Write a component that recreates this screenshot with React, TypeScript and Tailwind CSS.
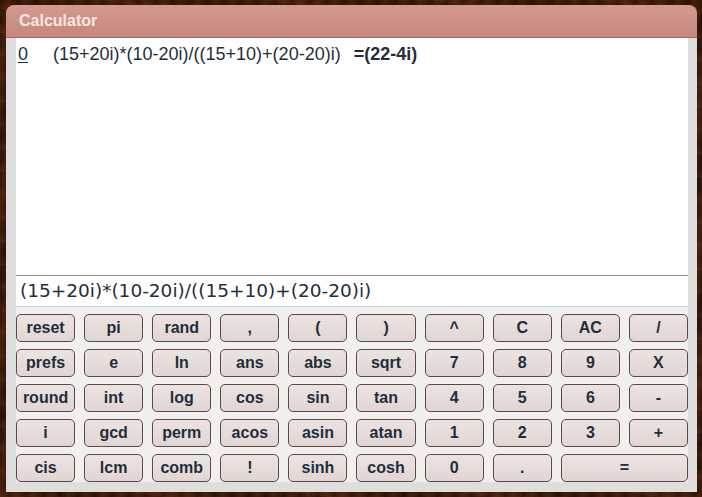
const keys: string[][] = [
  ["reset", "pi", "rand", ",", "(", ")", "^", "C", "AC", "/"],
  ["prefs", "e", "ln", "ans", "abs", "sqrt", "7", "8", "9", "X"],
  ["round", "int", "log", "cos", "sin", "tan", "4", "5", "6", "-"],
  ["i", "gcd", "perm", "acos", "asin", "atan", "1", "2", "3", "+"],
  ["cis", "lcm", "comb", "!", "sinh", "cosh", "0", ".", "="],
];

function Key({ label }: { label: string }) {
  return (
    <button
      className={
        "h-[28px] rounded-[5px] border border-[#5b4945] bg-gradient-to-b from-[#ece4e2] to-[#e1d5d2] text-[16px] font-bold leading-none text-[#1d2f3d] " +
        (label === "=" ? "col-span-2" : "")
      }
    >
      {label}
    </button>
  );
}

export default function App() {
  return (
    <div
      className="h-[497px] w-[702px] overflow-hidden pl-[6px] pr-[5px] pt-[5px] font-['Liberation_Sans',Arial,sans-serif]"
      style={{
        background:
          "repeating-linear-gradient(97deg, rgba(0,0,0,0.22) 0px, rgba(0,0,0,0) 4px, rgba(110,50,18,0.3) 9px, rgba(0,0,0,0) 17px), repeating-linear-gradient(8deg, rgba(120,55,20,0.25) 0px, rgba(0,0,0,0.2) 11px, rgba(0,0,0,0) 23px), #3a1a0b",
      }}
    >
      <div className="flex h-[487px] w-[691px] flex-col">
        <div className="flex h-[33px] items-center rounded-t-[8px] border-b border-[#a06a62] bg-gradient-to-b from-[#d39a90] to-[#c6877c] pl-[13px]">
          <span className="text-[16px] font-bold text-[#f6e8e2]">Calculator</span>
        </div>
        <div className="flex flex-1 flex-col bg-[#dedede] pb-[10px] pl-[10px] pr-[9px]">
          <div className="h-[237px] bg-white pl-[2px] pt-[3px] text-[18px] text-[#1f2f3c]">
            <div className="flex items-baseline">
              <span className="w-[35px] underline underline-offset-2">0</span>
              <span>(15+20i)*(10-20i)/((15+10)+(20-20)i)</span>
              <span className="ml-[13px] font-bold">=(22-4i)</span>
            </div>
          </div>
          <div className="flex h-[32px] items-center border-t border-b border-t-[#8c8c8c] border-b-[#c4d6df] bg-white pl-[4px] font-['DejaVu_Sans',Verdana,sans-serif] text-[18.5px] text-[#1f2f3c]">
            (15+20i)*(10-20i)/((15+10)+(20-20)i)
          </div>
          <div className="grid flex-1 grid-cols-10 content-start gap-x-[9px] gap-y-[7px] bg-[#f1f0ef] pt-[7px]">
            {keys.flat().map((k, i) => (
              <Key key={i} label={k} />
            ))}
          </div>
        </div>
      </div>
    </div>
  );
}
